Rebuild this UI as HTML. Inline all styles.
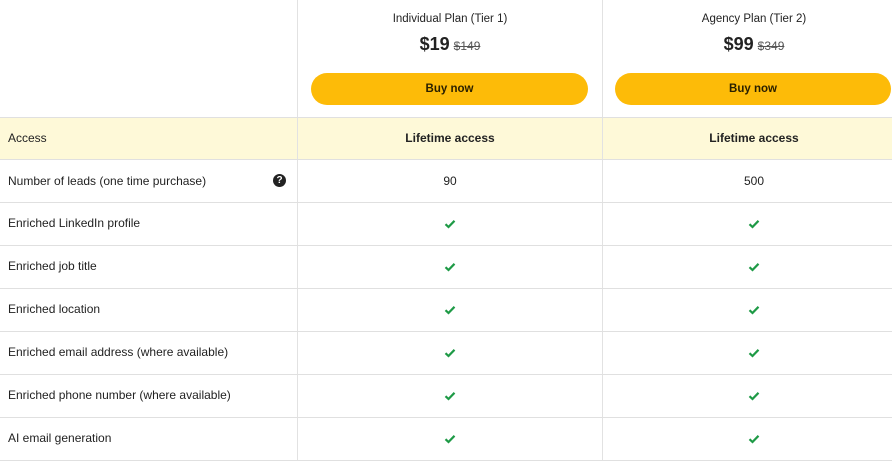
<!DOCTYPE html><html><head><style>
body{margin:0;width:892px;height:466px;background:#fff;font-family:"Liberation Sans",Arial,sans-serif;color:#222;overflow:hidden;position:relative}
.v{position:absolute;top:0;width:1px;height:460px;background:#e2e2e2}
.h{position:absolute;left:0;width:892px;height:1px;background:#e0e0e0}
.row{position:absolute;left:0;width:892px;height:42px;font-size:12px}
.row span{position:absolute;top:0;line-height:42px}
.l{left:8px}.c1{left:298px;width:304px;text-align:center}.c2{left:603px;width:302px;text-align:center}
.ttl{position:absolute;font-size:11.5px;text-align:center}
.pr{position:absolute;text-align:center;font-size:18px;font-weight:bold}
.pr s{font-size:12px;font-weight:normal;color:#555;margin-left:4px}
.btn{position:absolute;top:73px;height:32px;border-radius:16px;background:#fdbb08;font-size:11.5px;font-weight:bold;text-align:center;line-height:32px;color:#2a2000}
</style></head><body>
<div style="position:absolute;top:118px;left:0;width:892px;height:41px;background:#fef9d8"></div>
<div class="v" style="left:297px"></div><div class="v" style="left:602px"></div>
<div class="ttl" style="left:298px;width:304px;top:13px">Individual Plan (Tier 1)</div>
<div class="ttl" style="left:603px;width:302px;top:13px">Agency Plan (Tier 2)</div>
<div class="pr" style="left:298px;width:304px;top:34px">$19<s>$149</s></div>
<div class="pr" style="left:603px;width:302px;top:34px">$99<s>$349</s></div>
<div class="btn" style="left:311px;width:277px">Buy now</div>
<div class="btn" style="left:615px;width:276px">Buy now</div>
<div class="h" style="top:117px"></div><div class="h" style="top:159px"></div><div class="h" style="top:202px"></div><div class="h" style="top:245px"></div><div class="h" style="top:288px"></div><div class="h" style="top:331px"></div><div class="h" style="top:374px"></div><div class="h" style="top:417px"></div><div class="h" style="top:460px"></div>
<div class="row" style="top:117px"><span class="l">Access</span><span class="c1" style="font-weight:bold">Lifetime access</span><span class="c2" style="font-weight:bold">Lifetime access</span></div>
<div class="row" style="top:160px"><span class="l">Number of leads (one time purchase)</span><span style="left:273px;top:14px;width:13px;height:13px;border-radius:7px;background:#222;color:#fff;font-size:10px;line-height:13px;text-align:center;font-weight:bold">?</span><span class="c1">90</span><span class="c2">500</span></div>
<div id="rows"></div>
<script>
var n=["Enriched LinkedIn profile","Enriched job title","Enriched location","Enriched email address (where available)","Enriched phone number (where available)","AI email generation"];
var ck='<svg width="12" height="10" viewBox="0 0 12 10" style="vertical-align:middle"><path d="M1.5 5.2L4.5 8L10.5 1.8" stroke="#1e9a46" stroke-width="2.2" fill="none"/></svg>';
var h="";n.forEach(function(t,i){h+='<div class="row" style="top:'+(202+i*43)+'px"><span class="l">'+t+'</span><span class="c1">'+ck+'</span><span class="c2">'+ck+'</span></div>'});
document.getElementById("rows").innerHTML=h;
</script>
</body></html>
